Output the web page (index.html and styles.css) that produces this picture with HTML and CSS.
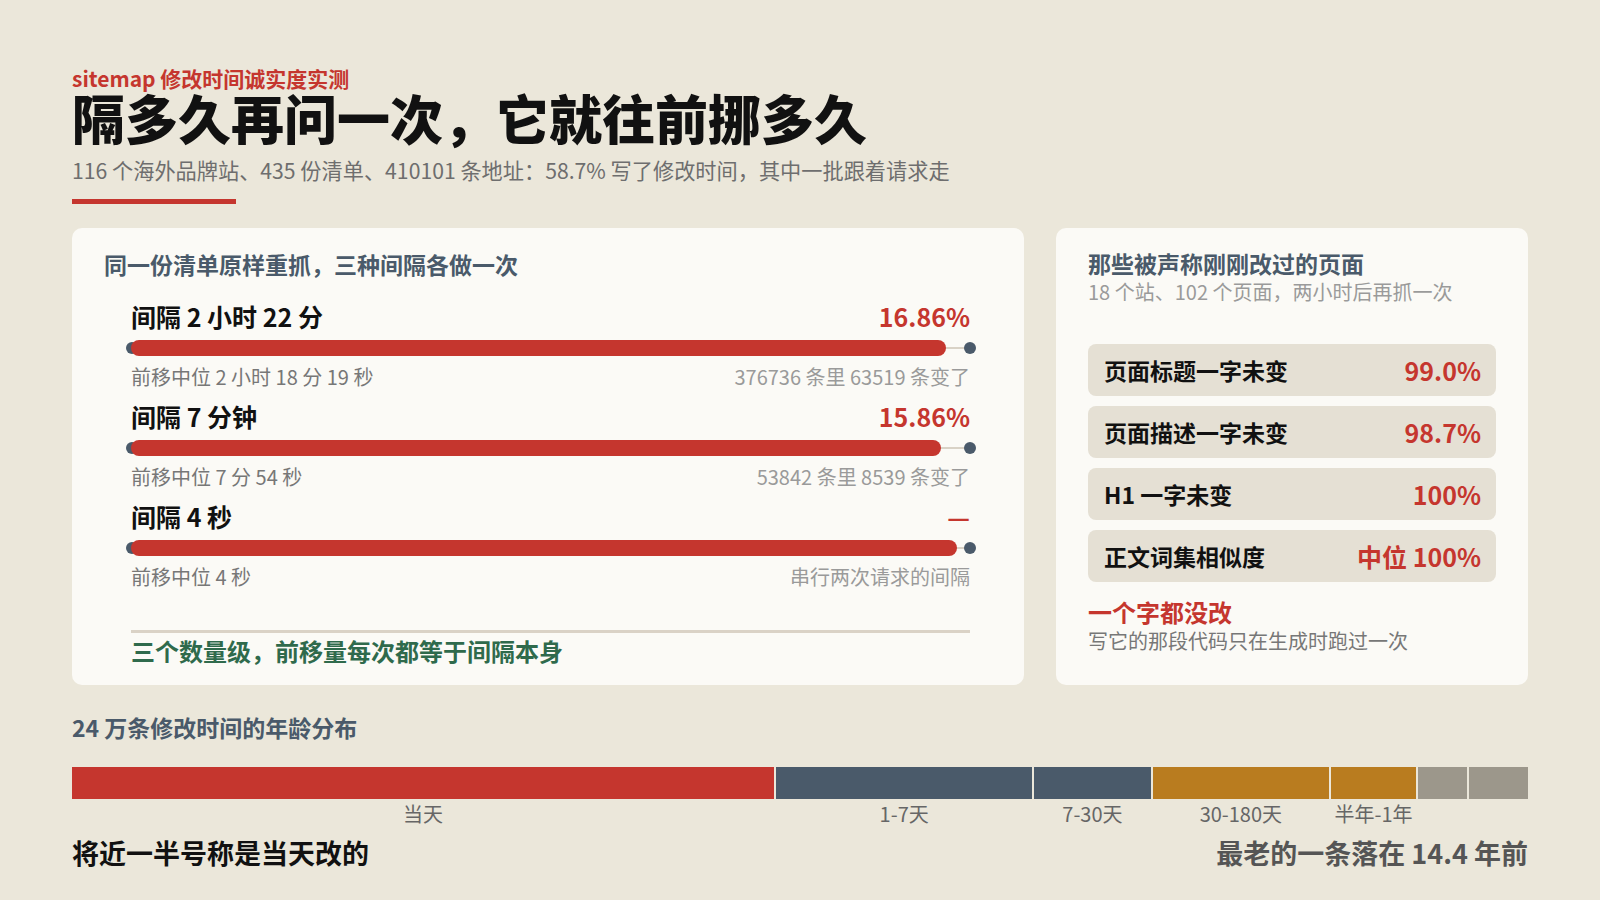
FILE: index.html
```html
<!DOCTYPE html>
<html lang="zh-CN">
<head>
<meta charset="utf-8">
<title>sitemap 修改时间诚实度实测</title>
<link rel="stylesheet" href="styles.css">
</head>
<body>
<div class="page">
  <header class="hero">
    <div class="kicker">sitemap 修改时间诚实度实测</div>
    <h1 class="title">隔多久再问一次，它就往前挪多久</h1>
    <p class="lede">116 个海外品牌站、435 份清单、410101 条地址：58.7% 写了修改时间，其中一批跟着请求走</p>
    <div class="rule"></div>
  </header>

  <section class="cards">
    <div class="card card-left">
      <h2 class="card-title">同一份清单原样重抓，三种间隔各做一次</h2>
      <div class="rows">
        <div class="row">
          <div class="row-head"><span class="row-label">间隔 2 小时 22 分</span><span class="row-value">16.86%</span></div>
          <div class="track"><span class="dot dot-start"></span><span class="fill" style="width:97.1%"></span><span class="dot dot-end"></span></div>
          <div class="row-foot"><span class="foot-left">前移中位 2 小时 18 分 19 秒</span><span class="foot-right">376736 条里 63519 条变了</span></div>
        </div>
        <div class="row">
          <div class="row-head"><span class="row-label">间隔 7 分钟</span><span class="row-value">15.86%</span></div>
          <div class="track"><span class="dot dot-start"></span><span class="fill" style="width:96.5%"></span><span class="dot dot-end"></span></div>
          <div class="row-foot"><span class="foot-left">前移中位 7 分 54 秒</span><span class="foot-right">53842 条里 8539 条变了</span></div>
        </div>
        <div class="row">
          <div class="row-head"><span class="row-label">间隔 4 秒</span><span class="row-value">—</span></div>
          <div class="track"><span class="dot dot-start"></span><span class="fill" style="width:98.5%"></span><span class="dot dot-end"></span></div>
          <div class="row-foot"><span class="foot-left">前移中位 4 秒</span><span class="foot-right">串行两次请求的间隔</span></div>
        </div>
      </div>
      <div class="divider"></div>
      <div class="card-note">三个数量级，前移量每次都等于间隔本身</div>
    </div>

    <div class="card card-right">
      <h2 class="card-title">那些被声称刚刚改过的页面</h2>
      <div class="card-sub">18 个站、102 个页面，两小时后再抓一次</div>
      <div class="stats">
        <div class="stat"><span class="stat-label">页面标题一字未变</span><span class="stat-value">99.0%</span></div>
        <div class="stat"><span class="stat-label">页面描述一字未变</span><span class="stat-value">98.7%</span></div>
        <div class="stat"><span class="stat-label">H1 一字未变</span><span class="stat-value">100%</span></div>
        <div class="stat"><span class="stat-label">正文词集相似度</span><span class="stat-value">中位 100%</span></div>
      </div>
      <div class="verdict">一个字都没改</div>
      <div class="verdict-sub">写它的那段代码只在生成时跑过一次</div>
    </div>
  </section>

  <section class="dist">
    <h3 class="dist-title">24 万条修改时间的年龄分布</h3>
    <div class="segments">
      <div class="seg" style="flex-grow:688"><div class="seg-bar c-red"></div><div class="seg-label">当天</div></div>
      <div class="seg" style="flex-grow:251"><div class="seg-bar c-slate"></div><div class="seg-label">1-7天</div></div>
      <div class="seg" style="flex-grow:114"><div class="seg-bar c-slate"></div><div class="seg-label">7-30天</div></div>
      <div class="seg" style="flex-grow:173"><div class="seg-bar c-amber"></div><div class="seg-label">30-180天</div></div>
      <div class="seg" style="flex-grow:83"><div class="seg-bar c-amber"></div><div class="seg-label">半年-1年</div></div>
      <div class="seg" style="flex-grow:48"><div class="seg-bar c-gray"></div><div class="seg-label"></div></div>
      <div class="seg" style="flex-grow:58"><div class="seg-bar c-gray"></div><div class="seg-label"></div></div>
    </div>
    <div class="dist-foot">
      <span class="dist-left">将近一半号称是当天改的</span>
      <span class="dist-right">最老的一条落在 14.4 年前</span>
    </div>
  </section>
</div>
</body>
</html>
```

FILE: styles.css
```css
* { box-sizing: border-box; margin: 0; padding: 0; }

html, body {
  width: 1600px;
  height: 900px;
  overflow: hidden;
}

body {
  background: #ebe7da;
  font-family: "Noto Sans CJK SC", "Noto Sans", sans-serif;
  color: #111;
}

.page {
  padding: 67px 72px 0 72px;
}

.kicker {
  font-size: 21px;
  line-height: 22px;
  font-weight: 700;
  color: #c5362e;
}

.title {
  font-size: 53px;
  line-height: 52px;
  font-weight: 900;
  color: #111;
  margin-top: 2px;
}

.lede {
  margin-top: 13px;
  font-size: 21.2px;
  line-height: 28px;
  color: #6e6e6e;
}

.rule {
  margin-top: 15px;
  width: 164px;
  height: 5px;
  background: #c5362e;
}

.cards {
  margin-top: 24px;
  display: grid;
  grid-template-columns: 952px 472px;
  column-gap: 32px;
}

.card {
  background: #fbfaf6;
  border-radius: 10px;
  padding: 0 32px;
}

.card-left {
  padding-top: 21px;
  padding-bottom: 19px;
}

.card-title {
  font-size: 23px;
  line-height: 30px;
  font-weight: 700;
  color: #4a5a6a;
}

.rows {
  margin-top: 21px;
  padding: 0 22px 0 27px;
  display: flex;
  flex-direction: column;
  gap: 10px;
}

.row-head, .row-foot {
  display: flex;
  justify-content: space-between;
  align-items: center;
}

.row-head { height: 32px; }

.row-label {
  font-size: 25px;
  font-weight: 700;
  color: #111;
}

.row-value {
  font-size: 25px;
  font-weight: 700;
  color: #c5362e;
}

.track {
  position: relative;
  margin-top: 8px;
  height: 16px;
}

.track::before {
  content: "";
  position: absolute;
  left: 0;
  right: 0;
  top: 7px;
  height: 2px;
  background: #d9d2c6;
}

.fill {
  position: absolute;
  left: 0;
  top: 0;
  height: 16px;
  border-radius: 8px;
  background: #c5362e;
}

.dot {
  position: absolute;
  top: 2px;
  width: 12px;
  height: 12px;
  border-radius: 50%;
  background: #4a5a6a;
}

.dot-start { left: -5px; }
.dot-end { right: -6px; }

.row-foot {
  margin-top: 6px;
  height: 28px;
}

.foot-left {
  font-size: 20px;
  color: #777;
}

.foot-right {
  font-size: 20px;
  color: #9a9a9a;
}

.divider {
  margin: 40px 22px 0 27px;
  height: 3px;
  background: #dad2c6;
}

.card-note {
  margin-top: 3px;
  padding-left: 27px;
  font-size: 24px;
  line-height: 30px;
  font-weight: 700;
  color: #2f6a4c;
}

.card-right {
  padding-top: 20px;
}

.card-sub {
  font-size: 20px;
  line-height: 28px;
  color: #9a9a9a;
}

.stats {
  margin-top: 38px;
  display: flex;
  flex-direction: column;
  gap: 10px;
}

.stat {
  height: 52px;
  border-radius: 8px;
  background: #e5e0d4;
  padding: 0 15px 0 16px;
  display: flex;
  justify-content: space-between;
  align-items: center;
}

.stat-label {
  font-size: 23px;
  font-weight: 700;
  color: #111;
}

.stat-value {
  font-size: 25px;
  font-weight: 700;
  color: #c5362e;
}

.verdict {
  margin-top: 15px;
  font-size: 24px;
  line-height: 30px;
  font-weight: 700;
  color: #c5362e;
}

.verdict-sub {
  font-size: 20px;
  line-height: 28px;
  color: #777;
}

.dist {
  margin-top: 27px;
}

.dist-title {
  font-size: 23px;
  line-height: 30px;
  font-weight: 700;
  color: #4a5a6a;
}

.segments {
  margin-top: 25px;
  display: flex;
  gap: 2px;
}

.seg {
  flex-basis: 0;
  min-width: 0;
  display: flex;
  flex-direction: column;
  align-items: center;
}

.seg-bar {
  width: 100%;
  height: 32px;
}

.c-red { background: #c5362e; }
.c-slate { background: #4a5a6a; }
.c-amber { background: #b97c1f; }
.c-gray { background: #9c978b; }

.seg-label {
  margin-top: 2px;
  height: 26px;
  line-height: 26px;
  font-size: 20px;
  color: #666;
  white-space: nowrap;
}

.dist-foot {
  margin-top: 8px;
  display: flex;
  justify-content: space-between;
  align-items: center;
  height: 34px;
}

.dist-left {
  font-size: 27px;
  font-weight: 700;
  color: #111;
}

.dist-right {
  font-size: 27px;
  font-weight: 700;
  color: #555;
}
```
